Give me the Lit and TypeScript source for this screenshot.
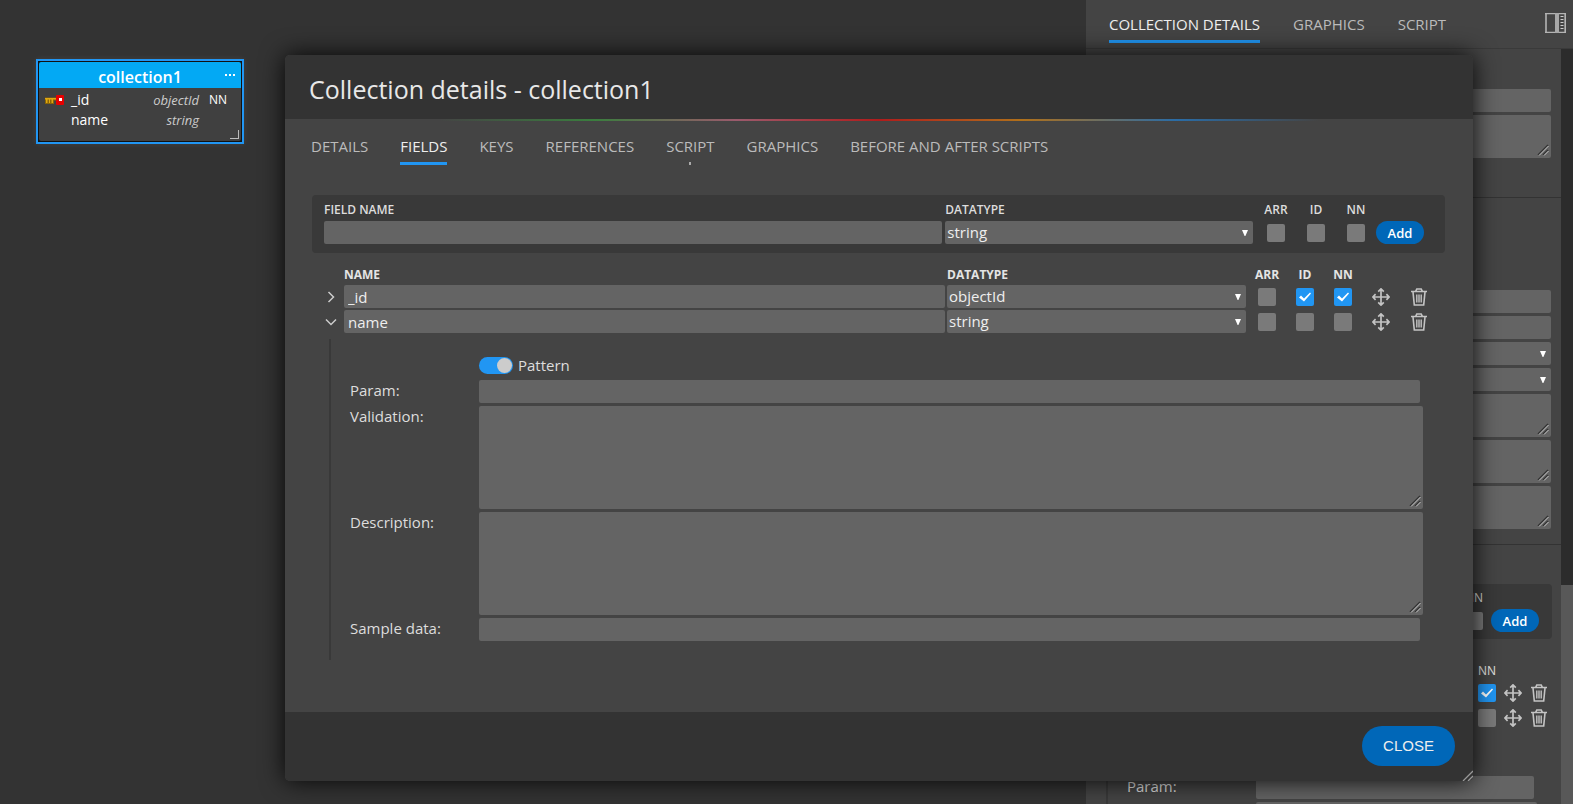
import { LitElement, html, css, nothing } from "lit";
import { customElement, property } from "lit/decorators.js";
import { classMap } from "lit/directives/class-map.js";

interface Field {
  name: string;
  type: string;
  arr: boolean;
  id: boolean;
  nn: boolean;
  open: boolean;
}

const FIELDS: Field[] = [
  { name: "_id", type: "objectId", arr: false, id: true, nn: true, open: false },
  { name: "name", type: "string", arr: false, id: false, nn: false, open: true },
];

const arrow = html`<svg class="caret" viewBox="0 0 6 6" aria-hidden="true"><path d="M0 0h6L3.4 6h-.8z" fill="#fff" /></svg>`;

const moveIcon = html`<svg class="icon" viewBox="0 0 18 18" aria-hidden="true">
  <path
    d="M9 1v16M1 9h16M6.2 3.600L9 .9l2.800 2.700M6.200 14.400L9 17.100l2.800-2.700M3.600 6.200L.9 9l2.700 2.800M14.400 6.200L17.100 9l-2.700 2.800"
    fill="none"
    stroke="#c4c4c4"
    stroke-width="1.7"
  />
</svg>`;

const trashIcon = html`<svg class="icon" viewBox="0 0 18 18" aria-hidden="true">
  <path
    d="M1 3.500h16M5.600 3.300L6.800 1h4.400l1.200 2.300M3 4l1.300 13h9.400L15 4"
    fill="none"
    stroke="#c4c4c4"
    stroke-width="1.6"
  />
  <path d="M6.800 6.500v8M9 6.500v8M11.200 6.500v8" stroke="#c4c4c4" stroke-width="1.400" />
</svg>`;

const select = (label: string, value: string) => html`<span class="select">
  <select aria-label=${label}><option>${value}</option></select>${arrow}
</span>`;

const controls = css`
  * {
    box-sizing: border-box;
  }
  input,
  select,
  textarea,
  button {
    font: inherit;
    color: inherit;
    margin: 0;
    border: 0;
    outline: 0;
  }
  input[type="text"],
  select,
  textarea {
    display: block;
    width: 100%;
    height: 23px;
    padding: 0 4px;
    border-radius: 2px;
    background: #646464;
    color: #eee;
    font-weight: 500;
  }
  textarea {
    height: 43px;
    resize: both;
  }
  textarea::-webkit-resizer {
    background: url("data:image/svg+xml,%3Csvg xmlns='http://www.w3.org/2000/svg' width='15' height='15'%3E%3Cpath d='M2 12L12 2M7 12l5-5' stroke='%23333' stroke-width='1.500'/%3E%3Cpath d='M3 12.500L12.500 3M8 12.500L12.500 8' stroke='%23ccc'/%3E%3C/svg%3E")
      right bottom no-repeat;
  }
  select {
    appearance: none;
    padding: 0 2px;
    line-height: 23px;
  }
  .select {
    display: grid;
    align-items: center;
    justify-items: end;
  }
  .select > * {
    grid-area: 1 / 1;
  }
  .caret {
    width: 6px;
    height: 6px;
    margin-right: 5px;
    pointer-events: none;
  }
  input[type="checkbox"] {
    appearance: none;
    display: block;
    width: 18px;
    height: 18px;
    margin: 0 auto;
    border-radius: 2px;
    background: #7a7a7a;
  }
  input[type="checkbox"]:checked {
    background: #2196f3;
  }
  input[type="checkbox"]:checked::before {
    content: "";
    display: block;
    width: 18px;
    height: 18px;
    background: #fff;
    clip-path: polygon(3px 10px, 5px 8px, 8px 11px, 14px 5px, 15px 6px, 8px 14px);
  }
  .add {
    height: 23px;
    border-radius: 12px;
    background: #0067b8;
    color: #fff;
    font-size: 13px;
    font-weight: 600;
    padding: 0;
    width: 48px;
  }
  .icon {
    display: block;
    width: 18px;
    height: 18px;
  }
`;

@customElement("add-field")
export class AddField extends LitElement {
  @property({ type: Boolean, reflect: true }) compact = false;

  static styles = [
    controls,
    css`
      :host {
        display: block;
        padding: 6px 21px 9px 12px;
        border-radius: 4px;
        background: #393939;
      }
      .row {
        display: grid;
        grid-template-columns: 2fr 1fr 40px 40px 40px 48px;
        align-items: start;
      }
      :host([compact]) {
        padding: 5px 13px 7px 12px;
      }
      :host([compact]) .row {
        grid-template-columns: 2fr 1fr 30px 30px 34px 48px;
      }
      label {
        display: grid;
        gap: 2px;
        padding-right: 3px;
        line-height: 18px;
      }
      .caption {
        font-size: 12px;
        color: #ddd;
        font-weight: 600;
      }
      :host([compact]) .caption {
        font-weight: 400;
      }
      .tick {
        justify-items: center;
        padding: 0;
        gap: 5px;
      }
      .add {
        margin-top: 20px;
      }
    `,
  ];

  render() {
    return html`<div class="row">
      <label><span class="caption">FIELD NAME</span><input type="text" /></label>
      <label><span class="caption">DATATYPE</span>${select("DATATYPE", "string")}</label>
      ${["ARR", "ID", "NN"].map(
        (c) => html`<label class="tick"><span class="caption">${c}</span><input type="checkbox" /></label>`
      )}
      <button class="add">Add</button>
    </div>`;
  }
}

@customElement("field-table")
export class FieldTable extends LitElement {
  @property({ type: Boolean, reflect: true }) compact = false;

  static styles = [
    controls,
    css`
      :host {
        display: block;
      }
      table {
        width: 100%;
        table-layout: fixed;
        border-spacing: 0;
      }
      .c-open {
        width: 28px;
      }
      .c-name {
        width: auto;
      }
      .c-type {
        width: 301px;
      }
      .c-tick {
        width: 38px;
      }
      :host([compact]) .c-type {
        width: 120px;
      }
      :host([compact]) .c-tick {
        width: 26px;
      }
      th {
        height: 18px;
        padding: 0;
        font-size: 12px;
        line-height: 18px;
        font-weight: 700;
        text-align: left;
        vertical-align: top;
        color: #e4e4e4;
      }
      :host([compact]) th {
        font-weight: 400;
      }
      th.center {
        text-align: center;
      }
      td {
        height: 25px;
        padding: 1px 2px 1px 0;
      }
      td.tick {
        padding: 0;
      }
      .plain {
        display: block;
        margin: 0 auto;
        padding: 0;
        width: 18px;
        height: 18px;
        background: none;
      }
      .chevron {
        display: block;
        width: 12px;
        height: 12px;
        margin: 0 5px;
      }
      td.more {
        height: auto;
        padding: 5px 0 0 13px;
      }
      .detail {
        display: grid;
        grid-template-columns: 129px 1fr;
        row-gap: 3px;
        padding: 14px 15px 19px 19px;
        border-left: 2px solid #393939;
        color: #ddd;
        line-height: 20px;
        font-weight: 500;
      }
      .detail input[type="text"] {
        width: calc(100% - 3px);
      }
      .detail textarea {
        height: 103px;
      }
      .pattern {
        grid-column: 2;
        display: flex;
        align-items: center;
        gap: 5px;
        height: 24px;
      }
      .detail input.toggle {
        width: 34px;
        height: 17px;
        margin: 0;
        border-radius: 9px;
      }
      .detail input.toggle::before {
        width: 15px;
        height: 15px;
        margin: 1px 1px 1px 18px;
        border-radius: 8px;
        background: #ccc;
        clip-path: none;
      }
    `,
  ];

  private tick(label: string, on: boolean) {
    return html`<td class="tick"><input type="checkbox" aria-label=${label} .checked=${on} /></td>`;
  }

  private detail() {
    return html`<tr>
      <td class="more" colspan="8">
        <div class="detail">
          <label class="pattern"><input class="toggle" type="checkbox" checked />Pattern</label>
          <label for="param">Param:</label><input id="param" type="text" />
          <label for="validation">Validation:</label><textarea id="validation"></textarea>
          <label for="description">Description:</label><textarea id="description"></textarea>
          <label for="sample">Sample data:</label><input id="sample" type="text" />
        </div>
      </td>
    </tr>`;
  }

  render() {
    return html`<table>
      <colgroup>
        <col class="c-open" />
        <col class="c-name" />
        <col class="c-type" />
        ${[0, 1, 2, 3, 4].map(() => html`<col class="c-tick" />`)}
      </colgroup>
      <thead>
        <tr>
          <th></th>
          <th>NAME</th>
          <th>DATATYPE</th>
          <th class="center">ARR</th>
          <th class="center">ID</th>
          <th class="center">NN</th>
          <th></th>
          <th></th>
        </tr>
      </thead>
      <tbody>
        ${FIELDS.map(
          (f) => html`<tr>
              <td>
                <button class="plain" aria-label="Expand" aria-expanded=${f.open}>
                  <svg class="chevron" viewBox="0 0 12 12" aria-hidden="true">
                    <path d=${f.open ? "M1 3.500l5 5 5-5" : "M3.500 1l5 5-5 5"} fill="none" stroke="#ccc" stroke-width="1.5" />
                  </svg>
                </button>
              </td>
              <td><input type="text" aria-label="Name" .value=${f.name} /></td>
              <td>${select("Datatype", f.type)}</td>
              ${this.tick("ARR", f.arr)} ${this.tick("ID", f.id)} ${this.tick("NN", f.nn)}
              <td class="tick"><button class="plain" aria-label="Move">${moveIcon}</button></td>
              <td class="tick"><button class="plain" aria-label="Delete">${trashIcon}</button></td>
            </tr>
            ${f.open ? this.detail() : nothing}`
        )}
      </tbody>
    </table>`;
  }
}

@customElement("tab-strip")
export class TabStrip extends LitElement {
  @property({ type: Array }) tabs: string[] = [];
  @property() active = "";
  @property() growing = "";

  static styles = css`
    :host {
      display: flex;
      gap: 32px;
    }
    button {
      display: grid;
      justify-items: center;
      gap: 4px;
      margin: 0;
      padding: 0;
      border: 0;
      background: none;
      font: inherit;
      line-height: 24px;
      color: #bbb;
    }
    .bar {
      width: 0;
      height: 3px;
      background: #aaa;
    }
    .active {
      color: #eee;
    }
    .active .bar {
      width: 100%;
      background: #2196f3;
    }
    .growing .bar {
      width: 2px;
    }
  `;

  render() {
    return this.tabs.map(
      (t) => html`<button role="tab" class=${classMap({ active: t === this.active, growing: t === this.growing })}>
        ${t}<span class="bar"></span>
      </button>`
    );
  }
}

@customElement("app-root")
export class AppRoot extends LitElement {
  static styles = [
    controls,
    css`
      :host {
        display: grid;
        grid-template-columns: 1fr 487px;
        position: relative;
        height: 100vh;
        overflow: hidden;
        background: #333;
        color: #fff;
        font: 15px/20px "Open Sans", "Noto Sans", sans-serif;
      }
      .canvas {
        position: relative;
      }
      .node {
        position: absolute;
        left: 36px;
        top: 59px;
        width: 208px;
        border: 2px solid #2196f3;
        background: #111;
        padding: 1px;
        box-shadow: 0 0 6px rgba(255, 255, 255, 0.08);
      }
      .node-head {
        display: grid;
        grid-template-columns: 20px 1fr 20px;
        align-items: center;
        height: 26px;
        padding: 0 1px;
        border-radius: 2px 2px 0 0;
        background: #03a9f4;
        font-size: 16px;
        text-align: center;
      }
      .node-head strong {
        grid-column: 2;
        padding-top: 3px;
        font-weight: 600;
      }
      .dots {
        width: 10px;
        height: 4px;
        margin: 0 auto;
      }
      .node-body {
        display: grid;
        grid-template-columns: 26px 1fr auto 30px;
        align-content: start;
        padding: 2px 12px 0 6px;
        height: 53px;
        background: #404040;
        border-radius: 0 0 2px 2px;
        font-size: 14px;
      }
      .node-body em {
        font-size: 13px;
        text-align: right;
        color: #ccc;
      }
      .node-body small {
        font-size: 12px;
        padding-left: 10px;
      }
      .node-grip {
        position: absolute;
        right: 3px;
        bottom: 3px;
        width: 9px;
        height: 9px;
        border: solid #bbb;
        border-width: 0 1px 1px 0;
      }
      .key {
        width: 19px;
        height: 10px;
        align-self: center;
      }
      .panel {
        display: grid;
        grid-template-rows: 49px 1fr;
        min-height: 0;
        background: #444;
      }
      .panel-head {
        display: flex;
        justify-content: space-between;
        align-items: flex-start;
        padding: 12px 7px 0 23px;
        border-bottom: 1px solid #3a3a3a;
      }
      .panel-head tab-strip {
        gap: 33px;
      }
      .panel-toggle {
        padding: 1px 0 0;
        background: none;
      }
      .panel-toggle svg {
        display: block;
        width: 21px;
        height: 20px;
      }
      .panel-body {
        display: grid;
        grid-template-columns: 1fr 12px;
        min-height: 0;
        overflow: hidden;
      }
      .content {
        min-height: 0;
      }
      .section {
        display: grid;
        gap: 3px;
        padding: 40px 10px 39px 130px;
        border-bottom: 1px solid #333;
      }
      .section.properties {
        padding-top: 92px;
        padding-bottom: 15px;
      }
      .section.fields {
        display: block;
        padding: 39px 9px 0 7px;
      }
      .section.fields add-field {
        margin-bottom: 23px;
      }
      .scroll {
        display: grid;
        grid-template-rows: 71fr 29fr;
        background: #2c2c2c;
      }
      .thumb {
        grid-row: 2;
        background: #585858;
      }
      .modal {
        position: absolute;
        top: 55px;
        left: 285px;
        right: 100px;
        overflow: hidden;
        resize: both;
        border-radius: 5px;
        background: #444;
        box-shadow: 0 0 24px rgba(0, 0, 0, 0.9);
      }
      .modal::-webkit-resizer {
        background: url("data:image/svg+xml,%3Csvg xmlns='http://www.w3.org/2000/svg' width='15' height='15'%3E%3Cpath d='M5 15L15 5M10 15l5-5' stroke='%23999' stroke-width='1.300'/%3E%3C/svg%3E")
          right bottom no-repeat;
      }
      .modal-head {
        background: #333;
      }
      h1 {
        margin: 0;
        padding: 18px 24px 14px;
        font-size: 25px;
        line-height: 32px;
        font-weight: 400;
        color: #e8e8e8;
      }
      .rainbow {
        height: 2px;
        background: linear-gradient(
          90deg,
          #444 13%,
          #3a7d3e 26%,
          #9a5a6c 38%,
          #b01c1c 50%,
          #b0701a 62%,
          #2a6ca6 75%,
          #444 87%
        );
      }
      .modal-body {
        padding: 13px 28px 52px 26px;
      }
      .modal-body tab-strip {
        margin-bottom: 30px;
      }
      .modal-body add-field {
        margin-left: 1px;
      }
      .modal-body field-table {
        margin: 13px 7px 0 5px;
      }
      .modal-foot {
        display: flex;
        justify-content: flex-end;
        padding: 14px 18px 15px;
        background: #333;
      }
      .close {
        width: 93px;
        height: 40px;
        border-radius: 20px;
        background: #0067b8;
        color: #eee;
        font: 15px/20px "Liberation Sans", sans-serif;
      }
    `,
  ];

  render() {
    return html`
      <main class="canvas">
        <article class="node">
          <header class="node-head">
            <strong>collection1</strong>
            <svg class="dots" viewBox="0 0 10 4" aria-hidden="true">
              <path d="M0 1h2v2H0zM4 1h2v2H4zM8 1h2v2H8z" fill="#fff" />
            </svg>
          </header>
          <div class="node-body">
            <svg class="key" viewBox="0 0 19 10" aria-hidden="true">
              <path d="M0 2.500h12v3H9v3.500H0z" fill="#8a6508" />
              <path d="M0 3h12v1.500H0zM1 4h1.500v4H1zM4 4h1v4H4zM6.500 4H8v4H6.500z" fill="#e0a810" />
              <rect x="11" y="0" width="8" height="10" rx="1" fill="#e60000" />
              <rect x="14" y="3" width="3" height="3" fill="#fff" />
            </svg>
            <span>_id</span><em>objectId</em><small>NN</small>
            <span></span><span>name</span><em>string</em><small></small>
          </div>
          <span class="node-grip"></span>
        </article>
      </main>

      <aside class="panel">
        <header class="panel-head">
          <tab-strip .tabs=${["COLLECTION DETAILS", "GRAPHICS", "SCRIPT"]} active="COLLECTION DETAILS"></tab-strip>
          <button class="panel-toggle" aria-label="Toggle panel">
            <svg viewBox="0 0 21 20" aria-hidden="true">
              <path d="M0 .5h21M0 19.500h21M1 0v20M20.200 0v20" fill="none" stroke="#b4b4b4" stroke-width="1.600" />
              <rect x="10" y="0" width="4" height="20" fill="#a8a8a8" />
              <path d="M15.500 3.500h3M15.500 6.500h3M15.500 9.500h3M15.500 12.500h3M15.500 15.500h3" stroke="#ccc" />
            </svg>
          </button>
        </header>
        <div class="panel-body">
          <div class="content">
            <section class="section">
              <input type="text" aria-label="Name" />
              <textarea aria-label="Description"></textarea>
            </section>
            <section class="section properties">
              <input type="text" aria-label="Size" />
              <input type="text" aria-label="Max" />
              ${select("Level", "")} ${select("Action", "")}
              <textarea aria-label="Validation"></textarea>
              <textarea aria-label="Collation"></textarea>
              <textarea aria-label="Options"></textarea>
            </section>
            <section class="section fields">
              <add-field compact></add-field>
              <field-table compact></field-table>
            </section>
          </div>
          <div class="scroll"><div class="thumb"></div></div>
        </div>
      </aside>

      <section class="modal" role="dialog" aria-labelledby="title">
        <header class="modal-head">
          <h1 id="title">Collection details - collection1</h1>
          <div class="rainbow"></div>
        </header>
        <div class="modal-body">
          <tab-strip
            .tabs=${["DETAILS", "FIELDS", "KEYS", "REFERENCES", "SCRIPT", "GRAPHICS", "BEFORE AND AFTER SCRIPTS"]}
            active="FIELDS"
            growing="SCRIPT"
          ></tab-strip>
          <add-field></add-field>
          <field-table></field-table>
        </div>
        <footer class="modal-foot"><button class="close">CLOSE</button></footer>
      </section>
    `;
  }
}
